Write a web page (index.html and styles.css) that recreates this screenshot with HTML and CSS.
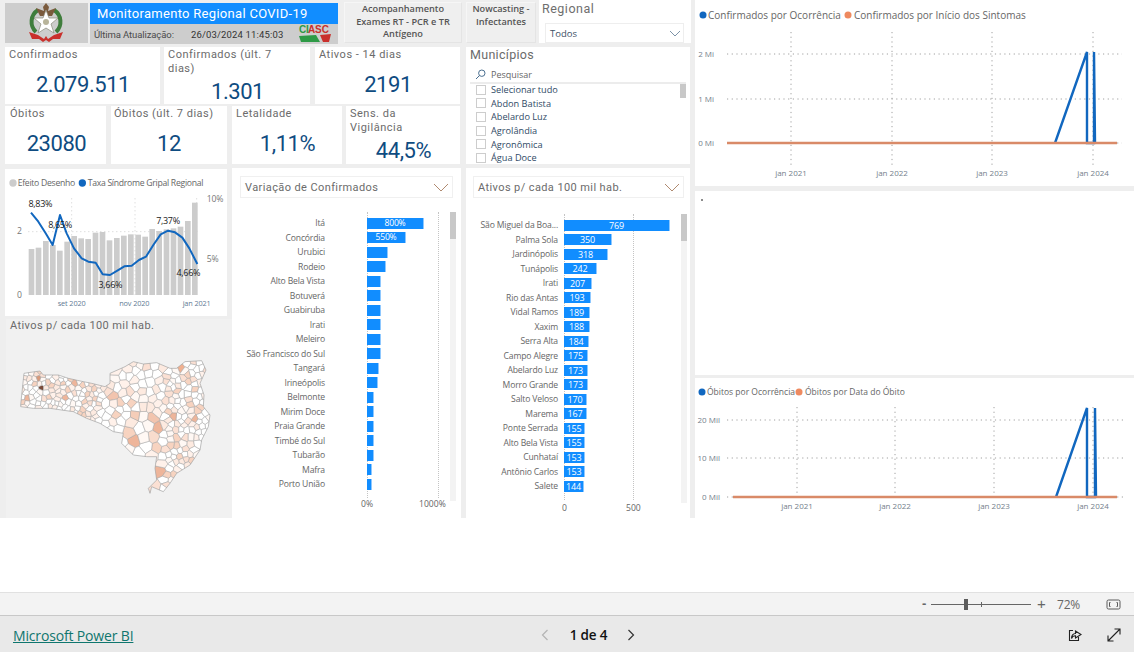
FILE: index.html
```html
<!DOCTYPE html>
<html lang="pt-BR">
<head>
<meta charset="utf-8">
<title>Monitoramento Regional COVID-19</title>
<link rel="stylesheet" href="styles.css">
</head>
<body>
<main class="canvas">
  <section class="left">
    <div class="top-row">
      <div class="crest">
        <svg width="83" height="40" viewBox="0 0 83 40">
          <path class="cr-wreath" d="M31 29 A14 14 0 0 1 33 7 M51 29 A14 14 0 0 0 49 7"/>
          <path class="cr-eagle" d="M41 0 L44 4 L43 8 L51 5 L47 13 L35 13 L31 5 L39 8 L38 4 Z"/>
          <polygon class="cr-star" points="41,7 44,15 53,15 46,21 49,30 41,25 33,30 36,21 29,15 38,15"/>
          <circle class="cr-core" cx="41" cy="19" r="3"/>
          <path class="cr-ribbon" d="M24 29 L33 32 L39 36 L41 33 L43 36 L49 32 L58 29 L55 36 L48 36 L44 39 L41 37 L38 39 L34 36 L27 36 Z"/>
        </svg>
      </div>
      <div class="title-box">
        <h1 class="title-main">Monitoramento Regional COVID-19</h1>
        <div class="title-sub">
          <span class="upd-label">Última Atualização:</span>
          <span class="upd-date">26/03/2024 11:45:03</span>
          <svg class="ciasc" width="36" height="20" viewBox="0 0 36 20">
            <text class="ci-g" x="1" y="9">CI</text>
            <text class="ci-r" x="10" y="9">ASC</text>
            <polygon class="ci-gf" points="1,12 18,11 22,18 3,18"/>
            <polygon class="ci-rf" points="22,11 33,10 31,18 25,18"/>
          </svg>
        </div>
      </div>
      <button class="nav-btn nav-a">Acompanhamento Exames RT - PCR e TR Antígeno</button>
      <button class="nav-btn nav-b">Nowcasting - Infectantes</button>
      <div class="regional">
        <div class="regional-title">Regional</div>
        <div class="regional-drop">
          <span>Todos</span>
          <svg width="12" height="7" viewBox="0 0 12 7"><path class="chev" d="M1 1 L6 6 L11 1"/></svg>
        </div>
      </div>
    </div>

    <div class="middle">
      <div class="kpis">
        <div class="kpi-row kpi-row1">
          <div class="card w155"><div class="card-t">Confirmados</div><div class="card-v">2.079.511</div></div>
          <div class="card w146"><div class="card-t">Confirmados (últ. 7 dias)</div><div class="card-v">1.301</div></div>
          <div class="card w145"><div class="card-t">Ativos - 14 dias</div><div class="card-v">2191</div></div>
        </div>
        <div class="kpi-row kpi-row2">
          <div class="card w101"><div class="card-t">Óbitos</div><div class="card-v">23080</div></div>
          <div class="card w116"><div class="card-t">Óbitos (últ. 7 dias)</div><div class="card-v">12</div></div>
          <div class="card w110"><div class="card-t">Letalidade</div><div class="card-v">1,11%</div></div>
          <div class="card w114"><div class="card-t">Sens. da Vigilância</div><div class="card-v">44,5%</div></div>
        </div>
      </div>
      <div class="muni">
        <div class="muni-title">Municípios</div>
        <div class="muni-search">
          <svg width="11" height="11" viewBox="0 0 11 11"><circle class="srch" cx="6.8" cy="4.2" r="3.2"/><path class="srch" d="M4.5 6.5 L1 10"/></svg>
          <span>Pesquisar</span>
        </div>
        <div class="muni-list">
          <div class="muni-thumb"></div>
          <label class="muni-item"><i class="box"></i>Selecionar tudo</label>
          <label class="muni-item"><i class="box"></i>Abdon Batista</label>
          <label class="muni-item"><i class="box"></i>Abelardo Luz</label>
          <label class="muni-item"><i class="box"></i>Agrolândia</label>
          <label class="muni-item"><i class="box"></i>Agronômica</label>
          <label class="muni-item"><i class="box"></i>Água Doce</label>
        </div>
      </div>
    </div>

    <div class="bottom">
      <div class="col-a">
        <div class="combo">
          <svg width="222" height="147" viewBox="15 12 666 441">
            <circle class="d-gray" cx="39" cy="54" r="11"/><text class="s-leg" x="53" y="63">Efeito Desenho</text>
            <circle class="d-blue" cx="247" cy="54" r="11"/><text class="s-leg" x="263" y="63">Taxa Síndrome Gripal Regional</text>
            <path class="grid3" d="M85 200H600M215 100V390M405 100V390M590 100V390"/>
            <g class="s-bars">
              <rect x="86" y="252" width="17" height="138"/><rect x="107" y="248" width="17" height="142"/><rect x="129" y="228" width="17" height="162"/><rect x="150" y="240" width="17" height="150"/><rect x="171" y="257" width="17" height="133"/><rect x="193" y="230" width="17" height="160"/><rect x="214" y="213" width="17" height="177"/><rect x="235" y="220" width="17" height="170"/><rect x="256" y="222" width="17" height="168"/><rect x="278" y="203" width="17" height="187"/><rect x="299" y="201" width="17" height="189"/><rect x="320" y="226" width="17" height="164"/><rect x="342" y="219" width="17" height="171"/><rect x="363" y="212" width="17" height="178"/><rect x="384" y="208" width="17" height="182"/><rect x="406" y="209" width="17" height="181"/><rect x="427" y="215" width="17" height="175"/><rect x="448" y="192" width="17" height="198"/><rect x="469" y="198" width="17" height="192"/><rect x="491" y="193" width="17" height="197"/><rect x="512" y="190" width="17" height="200"/><rect x="533" y="185" width="17" height="205"/><rect x="555" y="168" width="17" height="222"/><rect x="576" y="113" width="17" height="277"/>
            </g>
            <polyline class="s-line" points="93,143 115,170 137,205 158,240 180,150 200,205 222,250 245,280 265,290 287,293 308,328 330,330 352,317 373,304 395,302 417,285 438,275 460,240 482,208 504,197 525,202 547,218 568,250 592,297"/>
            <text class="s-data" x="121" y="125" text-anchor="middle">8,83%</text>
            <text class="s-data" x="180" y="190" text-anchor="middle">8,65%</text>
            <text class="s-data" x="331" y="370" text-anchor="middle">3,66%</text>
            <text class="s-data" x="504" y="177" text-anchor="middle">7,37%</text>
            <text class="s-data" x="565" y="334" text-anchor="middle">4,66%</text>
            <text class="s-ax" x="58" y="207" text-anchor="middle">2</text>
            <text class="s-ax" x="58" y="400" text-anchor="middle">0</text>
            <text class="s-ax" x="645" y="110" text-anchor="middle">10%</text>
            <text class="s-ax" x="638" y="292" text-anchor="middle">5%</text>
            <text class="s-axm" x="215" y="423" text-anchor="middle">set 2020</text>
            <text class="s-axm" x="403" y="423" text-anchor="middle">nov 2020</text>
            <text class="s-axm" x="590" y="423" text-anchor="middle">jan 2021</text>
          </svg>
        </div>
        <div class="map">
          <div class="map-title">Ativos p/ cada 100 mil hab.</div>
          <svg id="sc-map" class="map-svg" width="226" height="180" viewBox="18 0 678 540"></svg>
        </div>
      </div>

      <div class="panel panel-var">
        <div class="select"><span>Variação de Confirmados</span><svg width="16" height="9" viewBox="0 0 16 9"><path class="chev-o" d="M1 1 L8 8 L15 1"/></svg></div>
        <div class="rows rows-var">
          <div class="thumb-track"><div class="thumb"></div></div>
          <div class="row"><span class="lbl">Itá</span><div class="bar" style="width:57px">800%</div></div>
          <div class="row"><span class="lbl">Concórdia</span><div class="bar" style="width:39px">550%</div></div>
          <div class="row"><span class="lbl">Urubici</span><div class="bar" style="width:21px"></div></div>
          <div class="row"><span class="lbl">Rodeio</span><div class="bar" style="width:19px"></div></div>
          <div class="row"><span class="lbl">Alto Bela Vista</span><div class="bar" style="width:14px"></div></div>
          <div class="row"><span class="lbl">Botuverá</span><div class="bar" style="width:14px"></div></div>
          <div class="row"><span class="lbl">Guabiruba</span><div class="bar" style="width:14px"></div></div>
          <div class="row"><span class="lbl">Irati</span><div class="bar" style="width:14px"></div></div>
          <div class="row"><span class="lbl">Meleiro</span><div class="bar" style="width:14px"></div></div>
          <div class="row"><span class="lbl">São Francisco do Sul</span><div class="bar" style="width:14px"></div></div>
          <div class="row"><span class="lbl">Tangará</span><div class="bar" style="width:12px"></div></div>
          <div class="row"><span class="lbl">Irineópolis</span><div class="bar" style="width:11px"></div></div>
          <div class="row"><span class="lbl">Belmonte</span><div class="bar" style="width:7px"></div></div>
          <div class="row"><span class="lbl">Mirim Doce</span><div class="bar" style="width:7px"></div></div>
          <div class="row"><span class="lbl">Praia Grande</span><div class="bar" style="width:7px"></div></div>
          <div class="row"><span class="lbl">Timbé do Sul</span><div class="bar" style="width:7px"></div></div>
          <div class="row"><span class="lbl">Tubarão</span><div class="bar" style="width:7px"></div></div>
          <div class="row"><span class="lbl">Mafra</span><div class="bar" style="width:5px"></div></div>
          <div class="row"><span class="lbl">Porto União</span><div class="bar" style="width:5px"></div></div>
        </div>
        <div class="axis axis-var"><span>0%</span><span>1000%</span></div>
      </div>

      <div class="panel panel-ativos">
        <div class="select"><span>Ativos p/ cada 100 mil hab.</span><svg width="16" height="9" viewBox="0 0 16 9"><path class="chev-o" d="M1 1 L8 8 L15 1"/></svg></div>
        <div class="rows rows-ativos">
          <div class="thumb-track"><div class="thumb"></div></div>
          <div class="row"><span class="lbl">São Miguel da Boa...</span><div class="bar val" style="width:106px">769</div></div>
          <div class="row"><span class="lbl">Palma Sola</span><div class="bar val" style="width:48px">350</div></div>
          <div class="row"><span class="lbl">Jardinópolis</span><div class="bar val" style="width:44px">318</div></div>
          <div class="row"><span class="lbl">Tunápolis</span><div class="bar val" style="width:33px">242</div></div>
          <div class="row"><span class="lbl">Irati</span><div class="bar val" style="width:28px">207</div></div>
          <div class="row"><span class="lbl">Rio das Antas</span><div class="bar val" style="width:27px">193</div></div>
          <div class="row"><span class="lbl">Vidal Ramos</span><div class="bar val" style="width:26px">189</div></div>
          <div class="row"><span class="lbl">Xaxim</span><div class="bar val" style="width:26px">188</div></div>
          <div class="row"><span class="lbl">Serra Alta</span><div class="bar val" style="width:25px">184</div></div>
          <div class="row"><span class="lbl">Campo Alegre</span><div class="bar val" style="width:24px">175</div></div>
          <div class="row"><span class="lbl">Abelardo Luz</span><div class="bar val" style="width:24px">173</div></div>
          <div class="row"><span class="lbl">Morro Grande</span><div class="bar val" style="width:24px">173</div></div>
          <div class="row"><span class="lbl">Salto Veloso</span><div class="bar val" style="width:23px">170</div></div>
          <div class="row"><span class="lbl">Marema</span><div class="bar val" style="width:23px">167</div></div>
          <div class="row"><span class="lbl">Ponte Serrada</span><div class="bar val" style="width:21px">155</div></div>
          <div class="row"><span class="lbl">Alto Bela Vista</span><div class="bar val" style="width:21px">155</div></div>
          <div class="row"><span class="lbl">Cunhataí</span><div class="bar val" style="width:21px">153</div></div>
          <div class="row"><span class="lbl">Antônio Carlos</span><div class="bar val" style="width:21px">153</div></div>
          <div class="row"><span class="lbl">Salete</span><div class="bar val" style="width:20px">144</div></div>
        </div>
        <div class="axis axis-ativos"><span>0</span><span>500</span></div>
      </div>
    </div>
  </section>

  <section class="right">
    <div class="chart chart1">
      <svg width="439" height="186" viewBox="695 0 439 186">
        <circle class="d-blue" cx="703" cy="15" r="3.5"/><text class="leg" x="708" y="19">Confirmados por Ocorrência</text>
        <circle class="d-orange" cx="848" cy="15" r="3.5"/><text class="leg" x="854" y="19">Confirmados por Início dos Sintomas</text>
        <path class="grid" d="M727 54H1122M727 99H1122M727 143H1122M791 32V167M892 32V167M992 32V167M1093 32V167"/>
        <polyline class="l-blue" points="1055,143 1087,52 1087,143 1094,143 1094,52 1095,143"/>
        <path class="l-orange" d="M727 143H1117"/>
        <text class="ax" x="714" y="57" text-anchor="end">2 Mi</text>
        <text class="ax" x="714" y="102" text-anchor="end">1 Mi</text>
        <text class="ax" x="714" y="146" text-anchor="end">0 Mi</text>
        <text class="ax" x="791" y="176" text-anchor="middle">jan 2021</text>
        <text class="ax" x="892" y="176" text-anchor="middle">jan 2022</text>
        <text class="ax" x="992" y="176" text-anchor="middle">jan 2023</text>
        <text class="ax" x="1093" y="176" text-anchor="middle">jan 2024</text>
      </svg>
    </div>
    <div class="chart chart2"><span class="bullet"></span></div>
    <div class="chart chart3">
      <svg width="439" height="140" viewBox="695 378 439 140">
        <circle class="d-blue" cx="702" cy="392" r="3.5"/><text class="leg leg-sm" x="707" y="395">Óbitos por Ocorrência</text>
        <circle class="d-orange" cx="799" cy="392" r="3.5"/><text class="leg leg-sm" x="805" y="395">Óbitos por Data do Óbito</text>
        <path class="grid" d="M727 420H1125M727 458H1125M727 497H1125M797 407V497M895 407V497M994 407V497M1093 407V497"/>
        <polyline class="l-blue" points="1056,497 1087,408 1087,497 1095,497 1095,408 1096,497"/>
        <path class="l-orange" d="M733 497H1117"/>
        <text class="ax" x="720" y="423" text-anchor="end">20 Mil</text>
        <text class="ax" x="720" y="461" text-anchor="end">10 Mil</text>
        <text class="ax" x="720" y="500" text-anchor="end">0 Mil</text>
        <text class="ax" x="797" y="509" text-anchor="middle">jan 2021</text>
        <text class="ax" x="895" y="509" text-anchor="middle">jan 2022</text>
        <text class="ax" x="994" y="509" text-anchor="middle">jan 2023</text>
        <text class="ax" x="1093" y="509" text-anchor="middle">jan 2024</text>
      </svg>
    </div>
  </section>
</main>

<div class="spacer"></div>

<div class="zoombar">
  <span class="z-minus">-</span>
  <div class="z-slider"><i class="z-thumb"></i><i class="z-tick"></i></div>
  <span class="z-plus">+</span>
  <span class="z-pct">72%</span>
  <svg class="z-fit" width="15" height="11" viewBox="0 0 15 11"><rect class="ic-g" x="1" y="1" width="13" height="9" rx="1.5"/><path class="ic-g" d="M4.5 3.5H3.5V7.5H4.5M10.5 3.5H11.5V7.5H10.5"/></svg>
</div>

<footer class="footer">
  <a class="pbi" href="#">Microsoft Power BI</a>
  <nav class="pager">
    <svg width="8" height="12" viewBox="0 0 8 12"><path class="pg-off" d="M6.5 1 L1.5 6 L6.5 11"/></svg>
    <span class="pg-text">1 de 4</span>
    <svg width="8" height="12" viewBox="0 0 8 12"><path class="pg-on" d="M1.5 1 L6.5 6 L1.5 11"/></svg>
  </nav>
  <div class="actions">
    <svg width="14" height="14" viewBox="0 0 14 14"><path class="ic-k" d="M5 2.5H1.5V12.5H10.5V9M7.5 5.5V3L13 6.5L7.5 10V7.8C5.5 7.8 4.2 8.6 3.5 10.5C3.5 7.5 5 5.5 7.5 5.5Z"/></svg>
    <svg width="14" height="14" viewBox="0 0 14 14"><path class="ic-k" d="M1 13L13 1M7.5 1H13V6.5M1 7.5V13H6.5"/></svg>
  </div>
</footer>
<script src="map.js"></script>
</body>
</html>
```
FILE: styles.css
```css
* { box-sizing: border-box; }
html, body { margin: 0; padding: 0; background: #fff; }
body { width: 1134px; height: 652px; overflow: hidden; font-family: "Open Sans", "Noto Sans", sans-serif; color: #605e5c; }

.canvas { display: flex; height: 518px; background: #eeeeee; }
.left { width: 695px; padding: 0 5px; flex: none; }
.right { flex: 1; display: flex; flex-direction: column; }

/* header row */
.top-row { display: flex; height: 43px; align-items: flex-end; }
.crest { width: 83px; height: 40px; background: #cdcdcd; flex: none; }
.crest svg { display: block; }
.cr-wreath { fill: none; stroke: #3f7d3c; stroke-width: 4; }
.cr-eagle { fill: #7a5a3c; }
.cr-star { fill: #fff; stroke: #8a8a7a; stroke-width: .7; }
.cr-core { fill: #b8b49a; }
.cr-ribbon { fill: #c9302c; }

.title-box { width: 248px; height: 40px; margin-left: 2px; flex: none; display: flex; flex-direction: column; }
.title-main { margin: 0; height: 21px; background: #118dff; color: #fff; font: 400 13px/22px Roboto, sans-serif; letter-spacing: .3px; padding-left: 7px; white-space: nowrap; }
.title-sub { flex: 1; background: #cdcdcd; display: flex; align-items: center; font: 400 9.5px Roboto, sans-serif; color: #4b4b4b; padding-left: 4px; letter-spacing: -.1px; }
.upd-label { width: 97px; }
.upd-date { width: 107px; color: #333; letter-spacing: .15px; }
.ciasc { display: block; }
.ci-g { font: 700 10px "Liberation Sans", sans-serif; fill: #2e9a46; }
.ci-r { font: 700 10px "Liberation Sans", sans-serif; fill: #c9302c; }
.ci-gf { fill: #2e9a46; }
.ci-rf { fill: #c9302c; }

.nav-btn { height: 41px; margin: 2px 0 0; padding: 0 4px; background: #efefef; border: 1px solid #e4e4e4; border-top-color: #f6f6f6; border-left-color: #f6f6f6; font: 600 9.2px/12.5px "Open Sans", sans-serif; color: #555; text-align: center; align-self: flex-start; flex: none; }
.nav-a { width: 118px; margin-left: 6px; padding-bottom: 2px; }
.nav-b { width: 70px; margin-left: 4px; padding: 0 2px 15px; }

.regional { width: 152px; height: 43px; margin-left: 3px; background: #fff; flex: none; padding: 1px 7px 1px 3px; }
.regional-title { font: 400 12.5px/15px Roboto, sans-serif; letter-spacing: .5px; color: #6e6e6e; }
.regional-drop { margin: 7px 0 0 3px; height: 20px; border: 1px solid #eeeeee; display: flex; align-items: center; justify-content: space-between; padding: 1px 2px 0 4px; font-size: 9.5px; color: #3d5166; }

.chev { fill: none; stroke: #7d93a8; stroke-width: 1; }
.chev-o { fill: none; stroke: #b08a70; stroke-width: 1; }

/* kpi + list */
.middle { display: flex; gap: 6px; margin-top: 4px; height: 117px; }
.kpis { width: 455px; display: flex; flex-direction: column; gap: 2px; flex: none; }
.kpi-row { display: flex; }
.kpi-row1 { height: 57px; gap: 4px; }
.kpi-row2 { height: 58px; gap: 4px; }
.card { background: #fff; display: flex; flex-direction: column; overflow: hidden; padding: 1px 3px 0 4px; flex: none; }
.w155 { width: 155px; }
.w146 { width: 146px; margin-right: 1px; }
.w145 { width: 145px; }
.w101 { width: 101px; margin-right: 1px; padding-left: 5px; }
.w116 { width: 116px; padding-left: 3px; margin-right: 1px; }
.w110 { width: 110px; }
.w114 { width: 114px; }
.card-t { font: 400 11px/14px Roboto, sans-serif; letter-spacing: .5px; color: #6b6b6b; padding-right: 14px; }
.w116 .card-t { padding-right: 0; white-space: nowrap; }
.card-v { flex: 1; display: flex; justify-content: center; align-items: center; padding-top: 3px; font: 400 22px/24px Roboto, sans-serif; letter-spacing: -.45px; color: #0f4c81; white-space: nowrap; }

.muni { width: 224px; background: #fff; padding: 0 4px; overflow: hidden; flex: none; }
.muni-title { font: 400 12.5px/16px Roboto, sans-serif; letter-spacing: .3px; color: #6b6b6b; }
.muni-search { display: flex; align-items: center; gap: 5px; height: 17px; margin-top: 4px; padding-left: 5px; font-size: 9px; color: #666; border-bottom: 2px solid #ececec; }
.srch { fill: none; stroke: #4a6f90; stroke-width: 1; }
.muni-list { position: relative; height: 80px; overflow: hidden; margin-top: -1px; }
.muni-thumb { position: absolute; right: 0; top: 1px; width: 6px; height: 14px; background: #c8c8c8; }
.muni-item { display: flex; align-items: center; gap: 5px; height: 13.6px; padding-left: 6px; font-size: 9.2px; color: #2f4a66; white-space: nowrap; }
.box { width: 10px; height: 10px; border: 1px solid #cdcdcd; flex: none; }

/* bottom */
.bottom { display: flex; margin-top: 4px; height: 350px; }
.col-a { width: 227px; flex: none; padding-top: 1px; display: flex; flex-direction: column; gap: 3px; }
.combo { width: 222px; height: 147px; background: #fff; }
.combo svg, .chart svg { display: block; }
.s-leg { font: 400 26px "Open Sans", sans-serif; fill: #666; letter-spacing: -.85px; }
.s-data { font: 400 27px "Open Sans", sans-serif; fill: #222; letter-spacing: -1px; }
.s-ax { font: 400 26px "Open Sans", sans-serif; fill: #777; letter-spacing: -.5px; }
.s-axm { font: 400 22px "Open Sans", sans-serif; fill: #5f7a94; letter-spacing: -.4px; }
.grid3 { fill: none; stroke: #d0d0d0; stroke-width: 3; stroke-dasharray: 3 9; }
.s-bars rect { fill: #cccccc; }
.s-line { fill: none; stroke: #1167bf; stroke-width: 6; stroke-linejoin: round; }
.d-gray { fill: #cccccc; }
.d-blue { fill: #1167bf; }
.d-orange { fill: #ee8a60; }

.map { flex: 1; margin-left: 1px; background: #f1f1f1; overflow: hidden; }
.map-title { height: 21px; font: 400 11px/14px Roboto, sans-serif; letter-spacing: .4px; color: #6b6b6b; padding: 0 0 0 4px; }
.map-svg { display: block; }

.panel { background: #fff; flex: none; display: flex; flex-direction: column; }
.panel-var { width: 229px; height: 350px; }
.panel-ativos { width: 224px; height: 350px; margin-left: 5px; }
.select { display: flex; align-items: center; justify-content: space-between; height: 22px; border: 1px solid #f0f0f0; font: 400 11px Roboto, sans-serif; letter-spacing: .4px; color: #6b6b6b; padding: 0 3px 0 4px; }
.panel-var .select { margin: 8px 8px 0 8px; }
.panel-ativos .select { margin: 8px 6px 0 7px; }

.rows { position: relative; }
.rows::before, .rows::after { content: ""; position: absolute; top: -4px; bottom: -6px; border-left: 1px dotted #c4c4c4; }
.rows-var { margin-top: 18px; height: 276px; }
.rows-var::before { left: 135px; }
.rows-var::after { left: 206px; }
.rows-ativos { margin-top: 20px; height: 276px; }
.rows-ativos::before { left: 98px; }
.rows-ativos::after { left: 167px; }

.thumb-track { position: absolute; top: -4px; bottom: -9px; background: #f3f3f3; width: 6px; }
.rows-var .thumb-track { left: 218px; }
.rows-ativos .thumb-track { left: 215px; }
.thumb { height: 27px; background: #c8c8c8; }

.row { position: relative; z-index: 1; display: flex; align-items: center; height: 14.5px; }
.lbl { font-size: 8.6px; color: #666; text-align: right; white-space: nowrap; letter-spacing: -.15px; flex: none; }
.rows-var .lbl { width: 93px; margin-right: 42px; }
.rows-ativos .lbl { width: 92px; margin-right: 6px; }
.bar { height: 11px; background: #118dff; border-right: 1px solid #8ec8ff; color: #fff; font-size: 8.6px; line-height: 11px; text-align: center; letter-spacing: -.2px; }
.val { font-size: 9px; }

.axis { position: relative; display: flex; font-size: 8.6px; color: #666; }
.axis-var { margin: 6px 0 0 125px; }
.axis-var span:first-child { width: 62px; padding-left: 4px; }
.axis-ativos { margin: 8px 0 0 96px; }
.axis-ativos span:first-child { width: 64px; }

/* right charts */
.chart { background: #fff; flex: none; }
.chart1 { height: 186px; }
.chart2 { height: 184px; margin-top: 5px; padding: 8px 0 0 6px; }
.chart3 { height: 140px; margin-top: 3px; }
.bullet { display: block; width: 2px; height: 2px; border-radius: 50%; background: #666; }
.leg { font: 400 10px "Open Sans", sans-serif; fill: #666; }
.leg-sm { font-size: 8.5px; }
.ax { font: 400 8px "Open Sans", sans-serif; fill: #74808c; }
.grid { fill: none; stroke: #a0a0a0; stroke-width: 1; stroke-dasharray: 1.2 3.5; }
.l-blue { fill: none; stroke: #1167bf; stroke-width: 2.4; stroke-linejoin: miter; }
.l-orange { fill: none; stroke: #d98a68; stroke-width: 2.4; }

/* bottom bars */
.spacer { height: 74px; background: #fff; }
.zoombar { height: 24px; background: #f3f3f3; border-top: 1px solid #e1e1e1; border-bottom: 1px solid #c8c8c8; display: flex; align-items: center; padding-left: 922px; color: #666; }
.z-minus { width: 9px; font: 700 13px/20px "Liberation Sans", sans-serif; }
.z-slider { position: relative; width: 100px; height: 1px; background: #666; }
.z-thumb { position: absolute; left: 33px; top: -5px; width: 4px; height: 11px; background: #5c5c5c; }
.z-tick { position: absolute; left: 50px; top: -2px; width: 1px; height: 5px; background: #666; }
.z-plus { margin-left: 6px; width: 20px; font: 400 15px/20px "Liberation Sans", sans-serif; }
.z-pct { width: 49px; font: 400 12px "Open Sans", sans-serif; letter-spacing: -.2px; }
.z-fit { display: block; }
.ic-g { fill: none; stroke: #5a5a5a; stroke-width: 1; }

.footer { height: 36px; background: #e9e9e9; display: flex; align-items: center; padding: 2px 0 0 13px; }
.pbi { width: 120px; flex: none; font: 400 14px "Open Sans", sans-serif; letter-spacing: -.16px; color: #0f766e; white-space: nowrap; }
.pager { margin-left: 408px; display: flex; align-items: center; }
.pg-text { width: 78px; padding-left: 1px; text-align: center; font: 600 13.5px "Open Sans", sans-serif; letter-spacing: -.2px; color: #111; }
.pg-off { fill: none; stroke: #b4b4b4; stroke-width: 1.2; }
.pg-on { fill: none; stroke: #333; stroke-width: 1.2; }
.actions { margin-left: auto; margin-right: 13px; display: flex; gap: 25px; }
.actions svg { display: block; }
.ic-k { fill: none; stroke: #222; stroke-width: 1.1; }
```
FILE: map.js
```js
(function () {
  var NS = "http://www.w3.org/2000/svg";
  var svg = document.getElementById("sc-map");
  var outline = [[62,195],[72,100],[105,95],[120,93],[130,105],[175,105],[205,115],[250,125],[275,130],[315,140],[330,130],[330,100],[375,80],[400,65],[430,72],[470,68],[510,85],[530,85],[555,65],[605,62],[618,90],[600,130],[612,165],[610,200],[630,225],[625,260],[605,300],[600,330],[570,375],[530,400],[510,430],[490,455],[455,440],[450,460],[445,445],[470,420],[465,385],[470,350],[440,350],[400,345],[365,310],[370,280],[340,275],[300,250],[260,235],[220,215],[150,205],[100,205],[62,200]];
  var pts = outline.map(function (p) { return p.join(","); }).join(" ");
  var seed = 4217;
  function rnd() { seed = (seed * 16807) % 2147483647; return seed / 2147483647; }
  function make(tag, attrs, parent) {
    var el = document.createElementNS(NS, tag);
    Object.keys(attrs).forEach(function (k) { el.setAttribute(k, attrs[k]); });
    parent.appendChild(el);
    return el;
  }
  function inside(x, y) {
    var c = false;
    for (var i = 0, j = outline.length - 1; i < outline.length; j = i++) {
      var a = outline[i], b = outline[j];
      if ((a[1] > y) !== (b[1] > y) && x < (b[0] - a[0]) * (y - a[1]) / (b[1] - a[1]) + a[0]) { c = !c; }
    }
    return c;
  }
  function spacing(x, y) {
    if (x < 300) { return 11; }
    if (x > 340 && x < 490 && y > 225) { return 26; }
    if (x > 500) { return 13; }
    return 18;
  }
  var sites = [];
  for (var t = 0; t < 9000; t++) {
    var sx = 60 + rnd() * 575, sy = 60 + rnd() * 405;
    if (!inside(sx, sy)) { continue; }
    var r = spacing(sx, sy), ok = true;
    for (var s = 0; s < sites.length && ok; s++) {
      var dx = sites[s][0] - sx, dy = sites[s][1] - sy;
      if (dx * dx + dy * dy < r * r) { ok = false; }
    }
    if (ok) { sites.push([sx, sy]); }
  }
  function clipCell(poly, a, b) {
    var mx = (a[0] + b[0]) / 2, my = (a[1] + b[1]) / 2, nx = b[0] - a[0], ny = b[1] - a[1], out = [];
    for (var i = 0; i < poly.length; i++) {
      var p = poly[i], q = poly[(i + 1) % poly.length];
      var dp = (p[0] - mx) * nx + (p[1] - my) * ny, dq = (q[0] - mx) * nx + (q[1] - my) * ny;
      if (dp <= 0) { out.push(p); }
      if ((dp < 0 && dq > 0) || (dp > 0 && dq < 0)) {
        var f = dp / (dp - dq);
        out.push([p[0] + (q[0] - p[0]) * f, p[1] + (q[1] - p[1]) * f]);
      }
    }
    return out;
  }
  var defs = make("defs", {}, svg);
  var clip = make("clipPath", { id: "sc-clip" }, defs);
  make("polygon", { points: pts }, clip);
  var blur = make("filter", { id: "sc-soft", x: "-5%", y: "-5%", width: "110%", height: "110%" }, defs);
  make("feGaussianBlur", { stdDeviation: "1" }, blur);

  var root = make("g", { filter: "url(#sc-soft)" }, svg);
  var g = make("g", { "clip-path": "url(#sc-clip)" }, root);
  var palette = ["#ffffff","#ffffff","#ffffff","#ffffff","#fff8f4","#fff1ea","#fdeae0","#fbe0d3","#f7d3c0"];
  var fills = sites.map(function () { return palette[Math.floor(rnd() * palette.length)]; });
  var marks = [[118,108,"#d9997a"],[122,143,"#7a4a38"],[228,128,"#eeb59a"],[400,305,"#eeb59a"],[545,78,"#f0b090"],[398,220,"#f5cdb8"],[460,240,"#f2c4ae"],[470,270,"#eeb59a"],[495,345,"#ffffff"],[458,295,"#f8dccd"],[350,170,"#f2c4ae"],[528,222,"#eeb59a"],[490,385,"#eeb59a"],[585,240,"#eeb59a"],[85,180,"#eeb59a"],[195,178,"#eeb59a"]];
  marks.forEach(function (m) {
    var best = 0, bd = 1e9;
    sites.forEach(function (p, i) {
      var d = (p[0] - m[0]) * (p[0] - m[0]) + (p[1] - m[1]) * (p[1] - m[1]);
      if (d < bd) { bd = d; best = i; }
    });
    fills[best] = m[2];
  });
  sites.forEach(function (a, i) {
    var poly = [[40, 40], [660, 40], [660, 480], [40, 480]];
    sites.forEach(function (b, j) { if (j !== i) { poly = clipCell(poly, a, b); } });
    make("polygon", {
      points: poly.map(function (p) { return p[0].toFixed(1) + "," + p[1].toFixed(1); }).join(" "),
      fill: fills[i], stroke: "#a8a8a8", "stroke-width": "1.6"
    }, g);
  });
  make("polygon", { points: pts, fill: "none", stroke: "#a0a0a0", "stroke-width": "2" }, root);
})();
```
